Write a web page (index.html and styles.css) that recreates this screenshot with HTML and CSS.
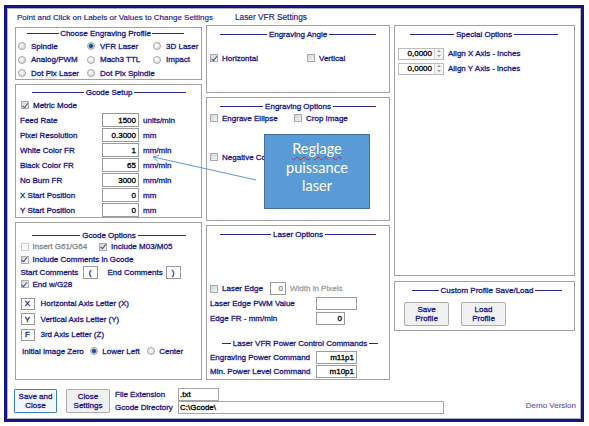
FILE: index.html
```html
<!DOCTYPE html>
<html lang="en">
<head>
<meta charset="utf-8">
<title>Laser VFR Settings</title>
<link rel="stylesheet" href="styles.css">
</head>
<body>
<div class="window">
  <div class="header">
    <span>Point and Click on Labels or Values to Change Settings</span>
    <span class="title">Laser VFR Settings</span>
  </div>
  <div class="columns">
    <div class="col col-left">
      <section class="box box-profile">
        <div class="legend lg-profile">Choose Engraving Profile</div>
        <div class="radio-grid">
          <div class="opt"><span class="rd"></span>Spindle</div>
          <div class="opt"><span class="rd on"></span>VFR Laser</div>
          <div class="opt"><span class="rd"></span>3D Laser</div>
          <div class="opt"><span class="rd"></span>Analog/PWM</div>
          <div class="opt"><span class="rd"></span>Mach3 TTL</div>
          <div class="opt"><span class="rd"></span>Impact</div>
          <div class="opt"><span class="rd"></span>Dot Pix Laser</div>
          <div class="opt"><span class="rd"></span>Dot Pix Spindle</div>
        </div>
      </section>
      <section class="box box-setup">
        <div class="legend lg-left">Gcode Setup</div>
        <div class="row r15"><div class="opt metric"><span class="cb on"></span>Metric Mode</div></div>
        <div class="row r15"><span class="lbl w82">Feed Rate</span><span class="in w37">1500</span><span class="unit">units/min</span></div>
        <div class="row r15"><span class="lbl w82">Pixel Resolution</span><span class="in w37">0.3000</span><span class="unit">mm</span></div>
        <div class="row r15"><span class="lbl w82">White Color FR</span><span class="in w37">1</span><span class="unit">mm/min</span></div>
        <div class="row r15"><span class="lbl w82">Black Color FR</span><span class="in w37">65</span><span class="unit">mm/min</span></div>
        <div class="row r15"><span class="lbl w82">No Burn FR</span><span class="in w37">3000</span><span class="unit">mm/min</span></div>
        <div class="row r15"><span class="lbl w82">X Start Position</span><span class="in w37">0</span><span class="unit">mm</span></div>
        <div class="row r15"><span class="lbl w82">Y Start Position</span><span class="in w37">0</span><span class="unit">mm</span></div>
      </section>
      <section class="box box-gopts">
        <div class="legend lg-left">Gcode Options</div>
        <div class="row r13"><div class="opt dis w78"><span class="cb"></span>Insert G61/G64</div><div class="opt"><span class="cb on"></span>Include M03/M05</div></div>
        <div class="row r13"><div class="opt"><span class="cb on"></span>Include Comments in Gcode</div></div>
        <div class="row r13"><span class="lbl w62">Start Comments</span><span class="in w15 mid">(</span><span class="lbl w58 ml10">End Comments</span><span class="in w15 mid">)</span></div>
        <div class="row r10"><div class="opt"><span class="cb on"></span>End w/G28</div></div>
        <div class="axis-rows">
          <div class="row r155"><span class="letter">X</span>Horizontal Axis Letter (X)</div>
          <div class="row r155"><span class="letter">Y</span>Vertical Axis Letter (Y)</div>
          <div class="row r155"><span class="letter">F</span>3rd Axis Letter (Z)</div>
        </div>
        <div class="row zero"><span>Initial Image Zero</span><div class="opt"><span class="rd on"></span>Lower Left</div><div class="opt"><span class="rd"></span>Center</div></div>
      </section>
    </div>

    <div class="col col-mid">
      <section class="box box-angle">
        <div class="legend lg-angle">Engraving Angle</div>
        <div class="row r14 angle-row"><div class="opt w97"><span class="cb on"></span>Horizontal</div><div class="opt"><span class="cb"></span>Vertical</div></div>
      </section>
      <section class="box box-engopts">
        <div class="legend lg-angle">Engraving Options</div>
        <div class="row r14"><div class="opt w84"><span class="cb"></span>Engrave Ellipse</div><div class="opt"><span class="cb"></span>Crop Image</div></div>
        <div class="row r14 neg-row"><div class="opt"><span class="cb"></span>Negative Color</div></div>
      </section>
      <section class="box box-laser">
        <div class="legend lg-angle">Laser Options</div>
        <div class="laser-rows">
          <div class="row r15"><div class="opt w60"><span class="cb"></span>Laser Edge</div><span class="in w16 h13 gray">0</span><span class="unit dis-txt">Width in Pixels</span></div>
          <div class="row r15"><span class="lbl w106">Laser Edge PWM Value</span><span class="in w41 h13"></span></div>
          <div class="row r15"><span class="lbl w106">Edge FR - mm/min</span><span class="in w29 h13">0</span></div>
        </div>
        <div class="legend lg-vfr">Laser VFR Power Control Commands</div>
        <div class="power-rows">
          <div class="row r14"><span class="lbl w106">Engraving Power Command</span><span class="in w41 h13">m11p1</span></div>
          <div class="row r14"><span class="lbl w106">Min. Power Level Command</span><span class="in w41 h13">m10p1</span></div>
        </div>
      </section>
    </div>

    <div class="col col-right">
      <section class="box box-special">
        <div class="legend lg-special">Special Options</div>
        <div class="spin-rows">
          <div class="row r15"><span class="spin"><span class="val">0,0000</span><span class="btns"><span class="up"></span><span class="down"></span></span></span><span class="unit">Align X Axis - inches</span></div>
          <div class="row r15"><span class="spin"><span class="val">0,0000</span><span class="btns"><span class="up"></span><span class="down"></span></span></span><span class="unit">Align Y Axis - inches</span></div>
        </div>
      </section>
      <section class="box box-custom">
        <div class="legend lg-custom">Custom Profile Save/Load</div>
        <div class="btn-row">
          <button class="pbtn">Save<br>Profile</button>
          <button class="pbtn">Load<br>Profile</button>
        </div>
      </section>
    </div>
  </div>

  <div class="bottom">
    <button class="bbtn focus">Save and<br>Close</button>
    <button class="bbtn">Close<br>Settings</button>
    <div class="files">
      <span class="flbl">File Extension</span><span class="fin w41">.txt</span>
      <span class="flbl">Gcode Directory</span><span class="fin w266">C:\Gcode\</span>
    </div>
    <span class="demo">Demo Version</span>
  </div>
</div>

<svg class="arrow" width="589" height="426" viewBox="0 0 589 426">
  <line x1="256" y1="180" x2="153.5" y2="157" stroke="#5b9bd5" stroke-width="1"/>
  <polyline points="157.6,161.2 153.2,157 159,155.3" fill="none" stroke="#5b9bd5" stroke-width="1"/>
</svg>
<div class="callout"><span class="squiggle">Reglage</span><br>puissance<br>laser</div>
</body>
</html>
```

FILE: styles.css
```css
* { box-sizing: border-box; }
html, body { margin: 0; padding: 0; background: #fff; }
body {
  font-family: "Liberation Sans", Arial, sans-serif;
  font-size: 8px;
  line-height: 9px;
  color: #1a1a86;
  width: 589px;
  height: 426px;
  overflow: hidden;
  position: relative;
  -webkit-text-stroke: 0.3px currentColor;
}
.window {
  margin: 5px 0 0 4px;
  width: 580px;
  height: 417px;
  border: 3px solid #14148a;
  box-shadow: inset 0 0 0 1px #b4b4b4;
  display: flex;
  flex-direction: column;
}
.header {
  height: 17px;
  display: flex;
  align-items: center;
  gap: 22px;
  padding: 1px 0 0 10px;
  white-space: nowrap;
  -webkit-text-stroke: 0.15px currentColor;
}
.header .title { font-size: 8.3px; }
.columns {
  display: grid;
  grid-template-columns: 187px 184px 181px;
  column-gap: 4px;
  padding-left: 8px;
  height: 355px;
}
.col { display: flex; flex-direction: column; gap: 4px; }
.col-left { padding-top: 2px; }
.col-right { gap: 5px; }

.box { border: 1px solid #a2a2a2; padding-top: 3px; }
.box-profile { height: 53px; padding: 0 0 0 1px; }
.box-setup { height: 134px; padding: 2.5px 0 0 4px; }
.box-gopts { height: 158px; padding: 7px 0 0 4.5px; }
.box-angle { height: 68px; padding-left: 3px; }
.box-engopts { height: 124px; padding-left: 3px; }
.box-laser { height: 155px; padding-left: 3px; }
.box-special { height: 251px; padding-left: 3px; }
.box-custom { height: 50px; padding-left: 9px; }

.legend {
  display: flex;
  align-items: center;
  gap: 2px;
  height: 10px;
  white-space: nowrap;
}
.legend::before, .legend::after {
  content: "";
  flex: 1;
  height: 1px;
  background: #2a2a92;
}
.lg-profile { margin: 0 17px 0 10px; gap: 1px; }
.lg-left { margin: 0 15px 0 12px; }
.box-gopts .lg-left { margin-left: 11.5px; }
.lg-angle { margin: 0 13px 0 10px; }
.lg-vfr { margin: 12px 11px 0 12px; }
.lg-special { margin: 0 16px 0 12px; }
.lg-custom { margin: 0 12px 0 8px; }

.radio-grid {
  display: grid;
  grid-template-columns: 69px 66px auto;
  grid-auto-rows: 13.5px;
  align-items: center;
  margin-top: 1.25px;
  padding-left: 1px;
}
.opt { display: flex; align-items: center; gap: 5px; white-space: nowrap; }
.box-setup .opt, .box-gopts .opt, .box-angle .opt, .box-engopts .opt, .box-laser .opt { gap: 4px; }
.opt.dis { color: #8c8c8c; }
.metric { margin-left: 1px; }

.row { display: flex; align-items: center; white-space: nowrap; }
.r15 { height: 15px; }
.r14 { height: 14px; }
.r13 { height: 13px; }
.r10 { height: 10px; }
.r155 { height: 15.5px; }

.w15 { width: 15px; }
.w16 { width: 16px; }
.w29 { width: 29px; }
.w37 { width: 37px; }
.w41 { width: 41px; }
.w58 { width: 58px; }
.w60 { width: 60px; }
.w62 { width: 62px; }
.w78 { width: 78.5px; flex: none; }
.w82 { width: 82px; flex: none; }
.w84 { width: 84px; flex: none; }
.w97 { width: 97px; flex: none; }
.w106 { width: 106px; flex: none; }
.ml10 { margin-left: 10px; }
.lbl { flex: none; }

.in {
  flex: none;
  height: 14px;
  border: 1px solid #9c9c9c;
  background: #fff;
  color: #000;
  display: flex;
  align-items: center;
  justify-content: flex-end;
  padding: 0 2px;
}
.in.h13 { height: 13px; }
.in.mid { justify-content: center; height: 13px; color: #1a1a86; }
.in.gray { color: #8c8c8c; }
.unit { margin-left: 4px; }
.dis-txt { color: #a4a4a4; }

.cb {
  flex: none;
  position: relative;
  width: 8px;
  height: 8px;
  border: 1px solid #acacac;
  background: linear-gradient(135deg, #d6d6d6, #f4f4f4);
}
.opt.dis .cb { border-color: #cfcfcf; background: #fafafa; }
.cb.on::after {
  content: "";
  position: absolute;
  left: 1.8px;
  top: -0.5px;
  width: 2px;
  height: 4.5px;
  border: solid #4a4a84;
  border-width: 0 1.2px 1.2px 0;
  transform: rotate(38deg);
}
.rd {
  flex: none;
  width: 8px;
  height: 8px;
  border-radius: 50%;
  border: 1px solid #a6a6a6;
  background: radial-gradient(circle at 40% 35%, #ffffff, #d2d2d2);
}
.rd.on {
  background: radial-gradient(circle, #1f4e86 0 1.5px, #7fa6cc 2.2px, #e6e6e6 3px);
}

.axis-rows { margin-top: 7px; }
.letter {
  flex: none;
  width: 14px;
  height: 12px;
  border: 1px solid #9c9c9c;
  display: flex;
  align-items: center;
  justify-content: center;
  margin-right: 6px;
}
.zero { height: 17px; padding-left: 1.5px; gap: 6.5px; }
.zero .opt { gap: 4px; }
.zero .opt + .opt { margin-left: 1px; }

.angle-row { margin-top: 12px; }
.neg-row { margin-top: 25px; }
.laser-rows { margin-top: 42px; }
.power-rows { margin-top: 2px; }

.spin-rows { margin-top: 7px; }
.spin {
  flex: none;
  width: 46px;
  height: 12px;
  border: 1px solid #bcbcbc;
  display: flex;
  color: #000;
}
.spin .val { flex: 1; text-align: right; padding-right: 2px; line-height: 10px; }
.spin .btns {
  width: 9px;
  border-left: 1px solid #d4d4d4;
  display: flex;
  flex-direction: column;
  background: #f3f3f3;
}
.spin .up, .spin .down {
  flex: 1;
  display: flex;
  align-items: center;
  justify-content: center;
}
.spin .up::after {
  content: "";
  border-left: 2px solid transparent;
  border-right: 2px solid transparent;
  border-bottom: 2px solid #9a9a9a;
}
.spin .down::after {
  content: "";
  border-left: 2px solid transparent;
  border-right: 2px solid transparent;
  border-top: 2px solid #9a9a9a;
}
.box-special .unit { margin-left: 4px; }

.btn-row { display: flex; gap: 12px; margin-top: 7px; }
button {
  font: inherit;
  color: inherit;
  line-height: 9px;
  padding: 0;
  margin: 0;
  -webkit-text-stroke: 0.3px currentColor;
}
.pbtn {
  width: 45px;
  height: 24px;
  border: 1px solid #adadad;
  border-radius: 2px;
  background: #f1f1f1;
}

.bottom {
  display: flex;
  align-items: flex-start;
  padding: 8px 0 0 7px;
  flex: 1;
}
.bbtn {
  flex: none;
  width: 44px;
  height: 24px;
  margin-top: 1px;
  border: 1px solid #adadad;
  background: #f0f0f0;
  border-radius: 1px;
}
.bbtn.focus {
  width: 43px;
  border-color: #3c7fc2;
  background: #f5f8fb;
  margin-right: 9px;
}
.files {
  display: grid;
  grid-template-columns: 63px auto;
  grid-template-rows: 13px 13px;
  align-items: center;
  margin-left: 5px;
}
.fin {
  height: 13px;
  border: 1px solid #a6a6a6;
  color: #000;
  padding-left: 1px;
  display: flex;
  align-items: center;
}
.w266 { width: 266px; }
.files .w41 { width: 41px; }
.demo {
  margin: 12.5px 5px 0 auto;
  color: #5a50a8;
  -webkit-text-stroke: 0.1px currentColor;
}

.arrow { position: absolute; left: 0; top: 0; pointer-events: none; }
.callout {
  position: absolute;
  left: 264px;
  top: 134px;
  width: 106px;
  height: 75px;
  background: #5b9bd5;
  border: 1px solid #41719c;
  color: #fff;
  font-family: Lato, "Open Sans", sans-serif;
  font-size: 14.5px;
  line-height: 18.5px;
  text-align: center;
  padding-top: 5px;
  -webkit-text-stroke: 0;
}
.squiggle {
  text-decoration: underline wavy #e02020;
  text-decoration-thickness: 1px;
  text-underline-offset: 2px;
}
```
